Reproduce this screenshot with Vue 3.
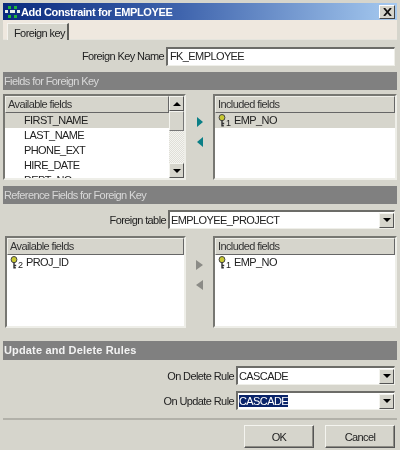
<script setup>
const keyColor = '#c8c832'
</script>

<template>
  <div class="dialog">
    <div class="titlebar">
      <svg class="app-icon" width="15" height="12" viewBox="0 0 15 12">
        <g fill="#1fb83a">
          <rect x="3" y="0" width="3" height="3" />
          <rect x="9" y="0" width="3" height="3" />
          <rect x="3" y="9" width="3" height="3" />
          <rect x="9" y="9" width="3" height="3" />
        </g>
        <g fill="#e8f0e8">
          <rect x="0" y="4" width="3" height="3" />
          <rect x="5" y="4" width="5" height="3" />
          <rect x="12" y="4" width="3" height="3" />
        </g>
      </svg>
      <span class="title">Add Constraint for EMPLOYEE</span>
      <button class="close" type="button">
        <svg width="9" height="8" viewBox="0 0 9 8">
          <path d="M1 0 L8 8 M8 0 L1 8" stroke="#111" stroke-width="1.8" />
        </svg>
      </button>
    </div>

    <div class="tabstrip">
      <div class="tab">Foreign key</div>
    </div>

    <div class="form-row name-row">
      <label>Foreign Key Name</label>
      <div class="input">FK_EMPLOYEE</div>
    </div>

    <div class="section">Fields for Foreign Key</div>

    <div class="picker first">
      <div class="list list-left with-scroll">
        <div class="list-main">
          <div class="list-head">Available fields</div>
          <div class="list-item selected plain">FIRST_NAME</div>
          <div class="list-item plain">LAST_NAME</div>
          <div class="list-item plain">PHONE_EXT</div>
          <div class="list-item plain">HIRE_DATE</div>
          <div class="list-item plain">DEPT_NO</div>
        </div>
        <div class="scrollbar">
          <div class="sb-btn"><span class="tri-up"></span></div>
          <div class="sb-thumb"></div>
          <div class="sb-track"></div>
          <div class="sb-btn"><span class="tri-down"></span></div>
        </div>
      </div>
      <div class="arrows">
        <span class="arrow-right teal"></span>
        <span class="arrow-left teal"></span>
      </div>
      <div class="list list-right">
        <div class="list-head">Included fields</div>
        <div class="list-item selected keyed">
          <svg class="key" width="8" height="13" viewBox="0 0 8 13">
            <ellipse cx="4" cy="3.6" rx="2.9" ry="3.1" :fill="keyColor" stroke="#444" stroke-width="1" />
            <path d="M4 6.5 V12.5 M4 9.5 H6.2 M4 11.7 H5.8" stroke="#333" stroke-width="1.4" fill="none" />
          </svg>
          <sub class="key-num">1</sub>
          <span>EMP_NO</span>
        </div>
      </div>
    </div>

    <div class="section">Reference Fields for Foreign Key</div>

    <div class="form-row table-row">
      <label>Foreign table</label>
      <div class="combo">
        <span class="combo-text">EMPLOYEE_PROJECT</span>
        <div class="combo-btn"><span class="tri-down"></span></div>
      </div>
    </div>

    <div class="picker second">
      <div class="list list-left">
        <div class="list-head">Available fields</div>
        <div class="list-item keyed">
          <svg class="key" width="8" height="13" viewBox="0 0 8 13">
            <ellipse cx="4" cy="3.6" rx="2.9" ry="3.1" :fill="keyColor" stroke="#444" stroke-width="1" />
            <path d="M4 6.5 V12.5 M4 9.5 H6.2 M4 11.7 H5.8" stroke="#333" stroke-width="1.4" fill="none" />
          </svg>
          <sub class="key-num">2</sub>
          <span>PROJ_ID</span>
        </div>
      </div>
      <div class="arrows">
        <span class="arrow-right grey"></span>
        <span class="arrow-left grey"></span>
      </div>
      <div class="list list-right">
        <div class="list-head">Included fields</div>
        <div class="list-item keyed">
          <svg class="key" width="8" height="13" viewBox="0 0 8 13">
            <ellipse cx="4" cy="3.6" rx="2.9" ry="3.1" :fill="keyColor" stroke="#444" stroke-width="1" />
            <path d="M4 6.5 V12.5 M4 9.5 H6.2 M4 11.7 H5.8" stroke="#333" stroke-width="1.4" fill="none" />
          </svg>
          <sub class="key-num">1</sub>
          <span>EMP_NO</span>
        </div>
      </div>
    </div>

    <div class="section bold">Update and Delete Rules</div>

    <div class="form-row rule-row">
      <label>On Delete Rule</label>
      <div class="combo short">
        <span class="combo-text">CASCADE</span>
        <div class="combo-btn"><span class="tri-down"></span></div>
      </div>
    </div>
    <div class="form-row rule-row">
      <label>On Update Rule</label>
      <div class="combo short">
        <span class="combo-text"><span class="highlight">CASCADE</span></span>
        <div class="combo-btn"><span class="tri-down"></span></div>
      </div>
    </div>

    <div class="footer">
      <button class="btn" type="button">OK</button>
      <button class="btn" type="button">Cancel</button>
    </div>
  </div>
</template>

<style>
html,
body {
  margin: 0;
  background: #d6d5cc;
}
</style>

<style scoped>
.dialog {
  width: 400px;
  height: 450px;
  box-sizing: border-box;
  padding: 3px 3px 0;
  background: #d6d5cc;
  font-family: "Liberation Sans", Arial, sans-serif;
  font-size: 11px;
  letter-spacing: -0.6px;
  color: #222;
  overflow: hidden;
  filter: blur(0.4px);
}

.titlebar {
  height: 17px;
  display: flex;
  align-items: center;
  padding: 0 2px;
  background: linear-gradient(90deg, #0a2a7e 0%, #3f64ad 45%, #a6caf0 100%);
}

.app-icon {
  flex: none;
  margin-right: 1px;
}

.title {
  flex: 1;
  color: #fff;
  font-weight: 700;
  letter-spacing: -0.37px;
}

.close {
  width: 16px;
  height: 14px;
  padding: 0;
  display: flex;
  align-items: center;
  justify-content: center;
  background: #d6d5cc;
  border: 1px solid;
  border-color: #fff #444 #444 #fff;
}

.tabstrip {
  height: 20px;
  box-sizing: border-box;
  padding: 3px 0 0 4px;
  background: #efe8df;
  border-bottom: 1px solid #e6e5de;
}

.tab {
  width: 62px;
  height: 17px;
  box-sizing: border-box;
  padding: 3px 0 0 6px;
  background: #d6d5cc;
  border: 1px solid #f4f3ee;
  border-right: 2px solid #5f5f5a;
  border-bottom: 0;
  line-height: 13px;
  white-space: nowrap;
}

.form-row {
  display: flex;
  align-items: center;
  justify-content: flex-end;
  gap: 2px;
}

.form-row label {
  white-space: nowrap;
}

.name-row {
  height: 20px;
  margin-top: 6px;
  padding-right: 2px;
}

.input {
  width: 229px;
  height: 19px;
  box-sizing: border-box;
  background: #fff;
  border: 1px solid;
  border-width: 2px 1px 1px 2px;
  border-color: #6c6c68 #efefe9 #efefe9 #6c6c68;
  padding-left: 2px;
  line-height: 15px;
}

.section {
  height: 18px;
  margin-top: 6px;
  padding-left: 1px;
  background: #808080;
  color: #d8d8d8;
  line-height: 18px;
}

.section.bold {
  height: 19px;
  margin-top: 0;
  color: #f2f2f2;
  font-weight: 700;
  letter-spacing: 0.15px;
  line-height: 19px;
}

.picker {
  display: flex;
  align-items: stretch;
}

.picker.first {
  height: 86px;
  margin-top: 4px;
  margin-bottom: 5px;
}

.picker.second {
  height: 92px;
  margin-top: 7px;
  padding-left: 2px;
  margin-bottom: 13px;
}

.list {
  box-sizing: border-box;
  background: #fff;
  border: 2px solid #777772;
  border-right-color: #eeeee8;
  border-bottom-color: #eeeee8;
  overflow: hidden;
}

.list-left {
  flex: 1;
  min-width: 0;
}

.list-right {
  width: 184px;
  flex: none;
}

.with-scroll {
  display: flex;
}

.list-main {
  flex: 1;
  min-width: 0;
  overflow: hidden;
}

.list-head {
  height: 17px;
  box-sizing: border-box;
  padding-left: 2px;
  background: #d6d5cc;
  border: 1px solid;
  border-color: #efefe9 #666 #666 #efefe9;
  line-height: 15px;
  color: #333;
}

.list-item {
  height: 15px;
  line-height: 15px;
  white-space: nowrap;
}

.list-item.plain {
  padding-left: 19px;
}

.list-item.selected {
  background: #d6d5cc;
}

.list-item.keyed {
  display: flex;
  align-items: center;
  padding-left: 3px;
}

.key {
  flex: none;
}

.key-num {
  width: 6px;
  font-size: 9px;
  line-height: 9px;
  align-self: flex-end;
  flex: none;
  margin-right: 2px;
  letter-spacing: 0;
}

.scrollbar {
  width: 15px;
  flex: none;
  display: flex;
  flex-direction: column;
  background: repeating-conic-gradient(#f4f4f0 0 25%, #e0dfd8 0 50%) 0 0 / 2px 2px;
}

.sb-btn,
.combo-btn {
  flex: none;
  width: 15px;
  height: 15px;
  box-sizing: border-box;
  display: flex;
  align-items: center;
  justify-content: center;
  background: #d6d5cc;
  border: 1px solid;
  border-color: #f4f4ef #555 #555 #f4f4ef;
}

.sb-thumb {
  height: 20px;
  flex: none;
  box-sizing: border-box;
  background: #d6d5cc;
  border: 1px solid;
  border-color: #f4f4ef #777 #777 #f4f4ef;
}

.sb-track {
  flex: 1;
}

.tri-up,
.tri-down {
  width: 0;
  height: 0;
  border-left: 4px solid transparent;
  border-right: 4px solid transparent;
}

.tri-up {
  border-bottom: 4px solid #000;
}

.tri-down {
  border-top: 4px solid #000;
}

.arrows {
  flex: none;
  width: 27px;
  box-sizing: border-box;
  display: flex;
  flex-direction: column;
  align-items: center;
  justify-content: center;
  gap: 10px;
}

.picker.first .arrows {
  padding-bottom: 11px;
}

.picker.second .arrows {
  padding-bottom: 15px;
}

.arrow-right,
.arrow-left {
  width: 0;
  height: 0;
  border-top: 5.5px solid transparent;
  border-bottom: 5.5px solid transparent;
}

.arrow-right.teal {
  border-left: 6px solid #0b7f86;
}

.arrow-left.teal {
  border-right: 6px solid #0b7f86;
}

.arrow-right.grey {
  border-left: 7px solid #8b8b86;
}

.arrow-left.grey {
  border-right: 7px solid #8b8b86;
}

.table-row {
  height: 19px;
  margin-top: 6px;
  padding-right: 2px;
}

.rule-row {
  height: 19px;
  margin-top: 6px;
  padding-right: 2px;
}

.combo {
  width: 227px;
  height: 19px;
  box-sizing: border-box;
  display: flex;
  align-items: center;
  background: #fff;
  border: 1px solid;
  border-width: 2px 1px 1px 2px;
  border-color: #6c6c68 #efefe9 #efefe9 #6c6c68;
}

.combo.short {
  width: 159px;
}

.combo-text {
  flex: 1;
  padding-left: 1px;
  line-height: 14px;
}

.combo-btn {
  height: 15px;
}

.highlight {
  background: #0a246a;
  color: #fff;
}

.footer {
  margin-top: 8px;
  height: 31px;
  box-sizing: border-box;
  border-top: 2px solid #b2b1a9;
  display: flex;
  justify-content: flex-end;
  gap: 11px;
  padding: 5px 2px 0 0;
}

.btn {
  width: 70px;
  height: 23px;
  padding: 0;
  background: #d6d5cc;
  border: 1px solid;
  border-color: #f4f4ef #555 #555 #f4f4ef;
  box-shadow: inset -1px -1px 0 #8d8c85;
  font: 11px "Liberation Sans", Arial, sans-serif;
  letter-spacing: -0.6px;
  color: #222;
}
</style>
